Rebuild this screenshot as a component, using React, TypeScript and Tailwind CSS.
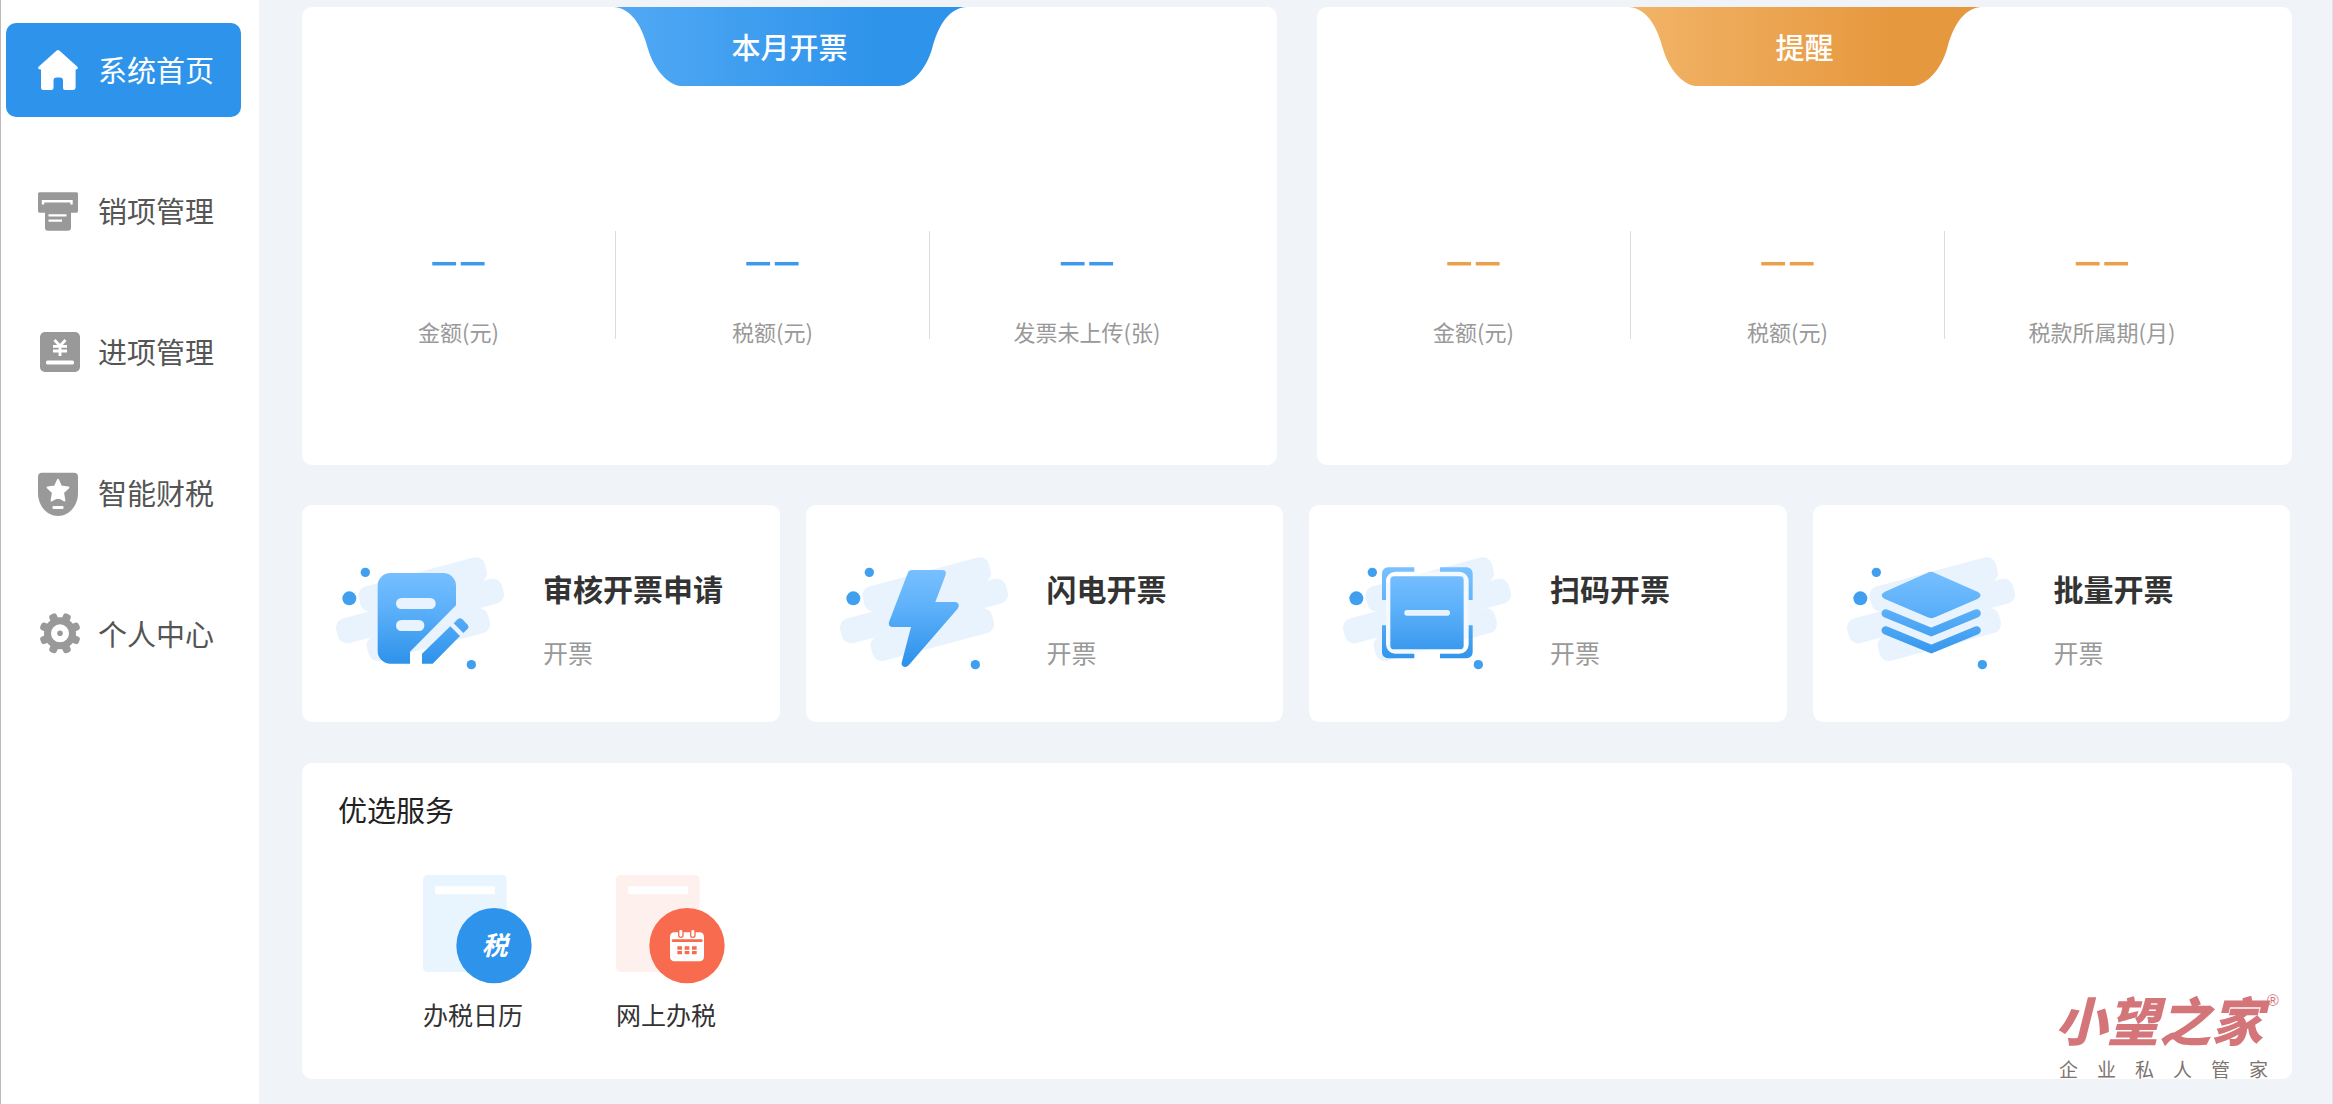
import React from 'react';
import { clsx } from 'clsx';

const menu = [
  { label: '系统首页', icon: <HomeIcon />, active: true },
  { label: '销项管理', icon: <PrinterIcon /> },
  { label: '进项管理', icon: <YuanIcon /> },
  { label: '智能财税', icon: <ShieldIcon /> },
  { label: '个人中心', icon: <GearIcon /> },
];

const actions = [
  { id: 'audit', title: '审核开票申请', art: AuditArt },
  { id: 'flash', title: '闪电开票', art: FlashArt },
  { id: 'scan', title: '扫码开票', art: ScanArt },
  { id: 'batch', title: '批量开票', art: BatchArt },
];

/* ---------- sidebar icons ---------- */

function MenuIcon({ children }: { children: React.ReactNode }) {
  return (
    <svg viewBox="0 0 42 46" className="w-[42px] h-[46px] shrink-0" fill="currentColor" aria-hidden="true">
      {children}
    </svg>
  );
}

function HomeIcon() {
  return (
    <MenuIcon>
      <path d="M18.4 3.8Q20 2.4 21.6 3.8L39.4 19.8Q40.6 21.6 38.8 22.3L37.6 22.6V40.5Q37.4 43 35 43H27Q25 43 25 41V33.5Q25 30.5 22 30.5H18.5Q15.5 30.5 15.5 33.5V41Q15.5 43 13.5 43H5.5Q3 43 3 40.5V22.6L1.2 22.3Q-.6 21.6.6 19.8Z" />
    </MenuIcon>
  );
}

function PrinterIcon() {
  return (
    <MenuIcon>
      <path d="M1.5 4.3H38.5Q40 4.3 40 5.8V23Q40 24.7 38.5 24.7H33V39.5Q33 42.7 30 42.7H10Q7 42.7 7 39.5V24.7H1.5Q0 24.7 0 23V5.8Q0 4.3 1.5 4.3Z" />
      <path d="M5 16.5V13.2H33.5V16.5" fill="none" stroke="#fff" strokeWidth="2.4" />
      <path d="M10.5 27.3H28.5M10.5 32.7H24" stroke="#fff" strokeWidth="2.2" />
    </MenuIcon>
  );
}

function YuanIcon() {
  return (
    <MenuIcon>
      <rect x="2" y="3" width="40" height="40" rx="5" />
      <path d="M16.5 11L22 17L27.5 11M22 17V27M15 17.3H29M15 22H29" fill="none" stroke="#fff" strokeWidth="2.8" />
      <rect x="8" y="31.5" width="28" height="4" rx="1.5" fill="#fff" />
    </MenuIcon>
  );
}

function ShieldIcon() {
  return (
    <MenuIcon>
      <path d="M4 2.7H36Q40 2.7 40 6.7V23C40 36 31 46 20 46S0 36 0 23V6.7Q0 2.7 4 2.7Z" />
      <path
        d="M20 9.8L23.1 16.6L30.4 17.4L25 22.4L26.4 30.4L20 26.8L13.6 30.4L15 22.4L9.6 17.4L16.9 16.6Z"
        fill="#fff"
        stroke="#fff"
        strokeWidth="2"
        strokeLinejoin="round"
      />
      <rect x="14.5" y="36" width="11" height="3" rx="1" fill="#fff" />
    </MenuIcon>
  );
}

function GearIcon() {
  return (
    <MenuIcon>
      <circle cx="22" cy="22.3" r="16" />
      <rect x="18" y="1.5" width="8" height="41.6" rx="3" transform="rotate(22.5 22 22.3)" />
      <rect x="18" y="1.5" width="8" height="41.6" rx="3" transform="rotate(67.5 22 22.3)" />
      <rect x="18" y="1.5" width="8" height="41.6" rx="3" transform="rotate(112.5 22 22.3)" />
      <rect x="18" y="1.5" width="8" height="41.6" rx="3" transform="rotate(157.5 22 22.3)" />
      <circle cx="22" cy="22.3" r="9" fill="#fff" />
      <circle cx="22" cy="22.3" r="2.8" />
    </MenuIcon>
  );
}

/* ---------- action card artwork ---------- */

function ActionArt({ id, children }: { id: string; children: React.ReactNode }) {
  return (
    <svg viewBox="135 200 507 345" className="w-[169px] h-[115px] shrink-0" aria-hidden="true">
      <defs>
        <linearGradient id={id} gradientUnits="userSpaceOnUse" x1="0" y1="240" x2="0" y2="525">
          <stop offset="0" stopColor="#78c0ff" />
          <stop offset=".4" stopColor="#5eb1fa" />
          <stop offset="1" stopColor="#2d92ea" />
        </linearGradient>
      </defs>
      <g fill="#e8f3fd">
        <rect x="202" y="247" width="392" height="76" rx="28" transform="rotate(-15 398 285)" />
        <rect x="133" y="327" width="514" height="76" rx="28" transform="rotate(-15 390 365)" />
        <rect x="227" y="398" width="376" height="76" rx="28" transform="rotate(-15 415 436)" />
      </g>
      <g fill="#419ff0">
        <circle cx="226" cy="249" r="14" />
        <circle cx="178" cy="327" r="21" />
        <circle cx="544" cy="526" r="14" />
      </g>
      <g fill={`url(#${id})`}>{children}</g>
    </svg>
  );
}

function AuditArt({ id }: { id: string }) {
  return (
    <ActionArt id={id}>
      <path d="M301 251H460A38 38 0 0 1 498 289V348L360 487V523H301A38 38 0 0 1 263 485V289A38 38 0 0 1 301 251Z" />
      <rect x="318" y="326" width="119" height="33" rx="16" fill="#e8f3fd" />
      <rect x="318" y="392" width="85" height="33" rx="16" fill="#e8f3fd" />
      <path d="M396 493L481 411L510 440L428 523H396Z" />
      <path d="M491 402L503 390Q510 384 517 390L533 406Q538 412 533 418L520 431Z" />
    </ActionArt>
  );
}

function FlashArt({ id }: { id: string }) {
  return (
    <ActionArt id={id}>
      <path d="M354 242H446Q458 242 455 256L424 338H484Q499 341 492 357L344 528Q334 538 325 529Q322 526 323 520L351 413H294Q282 411 285 398L341 252Q344 242 354 242Z" />
    </ActionArt>
  );
}

function ScanArt({ id }: { id: string }) {
  return (
    <ActionArt id={id}>
      <g transform="translate(-21 0)">
        <rect x="288" y="247" width="248" height="246" rx="28" fill="#fff" opacity=".5" />
        <path d="M276 332V252A18 18 0 0 1 294 234H373V247H316A28 28 0 0 0 288 275V332Z" />
        <path d="M450 234H530A18 18 0 0 1 548 252V332H536V275A28 28 0 0 0 508 247H450Z" />
        <path d="M276 408H288V465A28 28 0 0 0 316 493H373V507H294A18 18 0 0 1 276 489Z" />
        <path d="M548 408V489A18 18 0 0 1 530 507H450V493H508A28 28 0 0 0 536 465V408Z" />
        <rect x="301" y="261" width="220" height="219" rx="11" />
        <rect x="343" y="362" width="137" height="17" rx="8" fill="#e8f3fd" />
      </g>
    </ActionArt>
  );
}

function BatchArt({ id }: { id: string }) {
  return (
    <ActionArt id={id}>
      <path d="M380 250Q390 245 400 250L531 308Q547 318 531 328L402 384Q391 389 380 384L250 328Q234 318 250 308Z" />
      <g fill="none" stroke={`url(#${id})`} strokeWidth="25" strokeLinecap="round">
        <path d="M254 372L391 428L527 372" />
        <path d="M254 423L391 479L527 423" />
      </g>
    </ActionArt>
  );
}

/* ---------- service icons ---------- */

function TaxIcon() {
  return (
    <svg viewBox="0 0 327 327" className="w-[109px] h-[109px]" aria-hidden="true">
      <rect width="251" height="291" rx="14" fill="#e8f4fe" />
      <rect x="36" y="34" width="180" height="24" rx="4" fill="#fff" />
      <circle cx="213" cy="212" r="113" fill="#2e94eb" />
      <text x="215" y="240" textAnchor="middle" fontSize="78" fontWeight="700" fontStyle="italic" fill="#fff">
        税
      </text>
    </svg>
  );
}

function CalendarIcon() {
  return (
    <svg viewBox="0 0 327 327" className="w-[109px] h-[109px]" aria-hidden="true">
      <rect width="251" height="291" rx="14" fill="#fef0ed" />
      <rect x="36" y="34" width="180" height="24" rx="4" fill="#fff" />
      <circle cx="213" cy="212" r="113" fill="#f96b4e" />
      <rect x="162" y="172" width="102" height="87" rx="13" fill="#fff" />
      <g fill="#fff" stroke="#f96b4e" strokeWidth="4">
        <rect x="188" y="163" width="13" height="24" rx="6" />
        <rect x="224" y="163" width="13" height="24" rx="6" />
      </g>
      <path d="M171 197H256" stroke="#f96b4e" strokeWidth="8" strokeLinecap="round" />
      <path d="M184 219H242M184 233H242" stroke="#f96b4e" strokeWidth="10" strokeDasharray="14 8" />
    </svg>
  );
}

/* ---------- blocks ---------- */

interface StatPanelProps {
  title: string;
  id: string;
  from: string;
  to: string;
  valueClass: string;
  labels: string[];
}

function StatPanel({ title, id, from, to, valueClass, labels }: StatPanelProps) {
  return (
    <section className="bg-white rounded-[10px] pb-[118px]">
      <div className="relative w-[352px] h-[79px] mx-auto flex items-center justify-center">
        <svg viewBox="0 0 352 79" className="absolute inset-0 w-full h-full" aria-hidden="true">
          <defs>
            <linearGradient id={id}>
              <stop offset="0" stopColor={from} />
              <stop offset=".75" stopColor={to} />
            </linearGradient>
          </defs>
          <path
            d="M0 0C20 2 29 23 34 42C40 62 53 77 66 79H285C299 77 312 62 318 42C323 23 332 2 352 0Z"
            fill={`url(#${id})`}
          />
        </svg>
        <h2 className="relative pb-0.5 text-[29px] leading-10 font-medium text-white">{title}</h2>
      </div>
      <dl className="mt-[145px] pr-[33px] grid grid-cols-3">
        {labels.map((label, i) => (
          <div key={label} className="flex">
            <div className="flex-1 pt-4 flex flex-col-reverse gap-9 text-center">
              <dt className="text-[22px] leading-8 text-[#999]">{label}</dt>
              <dd className={clsx("text-[49px] leading-8 font-['Liberation_Sans',sans-serif]", valueClass)}>−−</dd>
            </div>
            {i < labels.length - 1 && <span className="w-px h-[108px] bg-[#dcdcdc]" />}
          </div>
        ))}
      </dl>
    </section>
  );
}

function Brand() {
  return (
    <div className="absolute right-3 bottom-0 w-[221px]">
      <div className="-ml-1 mb-[10px] flex items-start text-[#d4757a]">
        <span className="text-[52px] leading-[60px] font-black italic">小望之家</span>
        <sup className="ml-1 mt-1 top-0 text-[16px] leading-4 font-['Liberation_Sans',sans-serif]">®</sup>
      </div>
      <p className="w-[209px] flex justify-between text-[19px] leading-5 text-[#7d7470]">
        {Array.from('企业私人管家').map((char) => (
          <span key={char}>{char}</span>
        ))}
      </p>
    </div>
  );
}

export default function App() {
  return (
    <div className="min-h-screen flex bg-[#f0f3f8] border-l border-l-[#bbb] border-r border-r-[#dfe3ea] font-['Noto_Sans_CJK_SC',sans-serif]">
      <nav className="w-[258px] shrink-0 bg-white pt-[23px] pl-[5px] pr-[18px] flex flex-col gap-[47px]">
        {menu.map((item) => (
          <a
            key={item.label}
            href="#"
            className={clsx(
              'h-[94px] pl-8 flex items-center gap-[18px] rounded-[10px]',
              item.active ? 'bg-[#2e94eb] text-white' : 'text-[#999]'
            )}
          >
            {item.icon}
            <span className={clsx('pb-0.5 text-[29px] leading-10', !item.active && 'text-[#555]')}>{item.label}</span>
          </a>
        ))}
      </nav>

      <main className="flex-1 pt-[7px] pl-[43px] pr-10 pb-[25px] flex flex-col gap-10">
        <div className="grid grid-cols-2 gap-10">
          <StatPanel
            id="tab-blue"
            title="本月开票"
            from="#52a9f5"
            to="#2e93ea"
            valueClass="text-[#3d98ee]"
            labels={['金额(元)', '税额(元)', '发票未上传(张)']}
          />
          <StatPanel
            id="tab-orange"
            title="提醒"
            from="#f2b468"
            to="#e6983e"
            valueClass="text-[#e99f4c]"
            labels={['金额(元)', '税额(元)', '税款所属期(月)']}
          />
        </div>

        <div className="pr-0.5 grid grid-cols-4 gap-[26px]">
          {actions.map(({ id, title, art: Art }) => (
            <button key={id} type="button" className="h-[217px] pl-[33px] bg-white rounded-[10px] flex items-center gap-[39px] text-left">
              <Art id={`art-${id}`} />
              <span className="pt-2 flex flex-col gap-7">
                <span className="text-[30px] leading-10 font-bold text-[#333]">{title}</span>
                <span className="text-[25px] leading-8 text-[#999]">开票</span>
              </span>
            </button>
          ))}
        </div>

        <section className="relative mt-px bg-white rounded-[10px] pt-6 px-9 pb-[49px]">
          <h2 className="text-[29px] leading-[44px] text-[#222]">优选服务</h2>
          <div className="mt-11 pl-[85px] flex gap-[84px]">
            <a href="#" className="flex flex-col gap-[14px]">
              <TaxIcon />
              <span className="text-[25px] leading-8 text-[#333]">办税日历</span>
            </a>
            <a href="#" className="flex flex-col gap-[14px]">
              <CalendarIcon />
              <span className="text-[25px] leading-8 text-[#333]">网上办税</span>
            </a>
          </div>
          <Brand />
        </section>
      </main>
    </div>
  );
}
